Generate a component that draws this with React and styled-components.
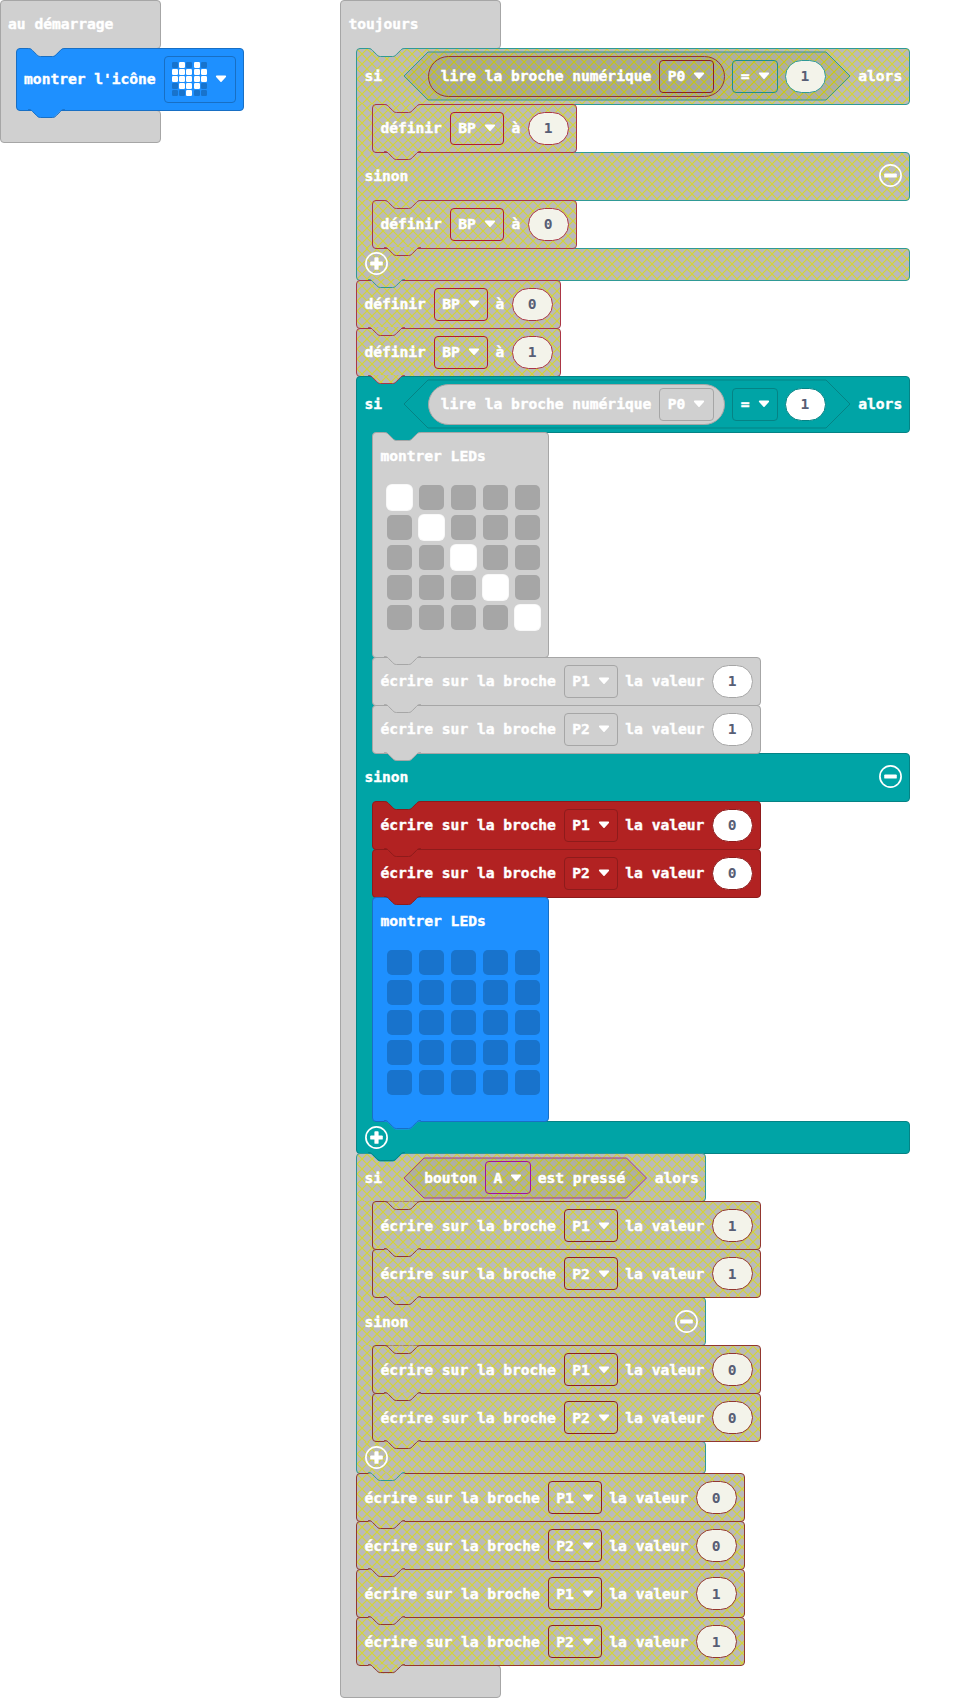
import React, { createContext, useContext, useId } from "react";
import styled, { createGlobalStyle, css } from "styled-components";

const GlobalStyle = createGlobalStyle`
  body { margin: 0; background: #fff; }
  *, *::before, *::after { box-sizing: border-box; }
`;

/* ---------- palette ---------- */

const themes = {
  hat: { fill: "#d0d0d0", line: "#a6a6a6", off: "#a6a6a6" },
  ghost: { fill: "#d0d0d0", line: "#a6a6a6", off: "#a6a6a6" },
  basic: { fill: "#1e90ff", line: "#186fc4", off: "#1873cc" },
  logic: { fill: "#00a4a6", line: "#058385" },
  pins: { fill: "#b22222", line: "#8e1b1b" },
  logicOff: { lattice: true, line: "#2f9a96" },
  pinsOff: { lattice: true, line: "#93372f" },
  varsOff: { lattice: true, line: "#ab3645" },
  inputOff: { lattice: true, line: "#a63a94" },
};

const Kind = createContext("hat");

const latticeLayers = (line, base) => css`
  background-color: ${base};
  background-image:
    linear-gradient(45deg, transparent calc(50% - 0.9px), ${line} calc(50% - 0.35px), ${line} calc(50% + 0.35px), transparent calc(50% + 0.9px)),
    linear-gradient(-45deg, transparent calc(50% - 0.9px), ${line} calc(50% - 0.35px), ${line} calc(50% + 0.35px), transparent calc(50% + 0.9px));
  background-size: 10px 10px;
`;

const paint = css`
  ${({ $kind }) =>
    themes[$kind].lattice
      ? latticeLayers("#d2d23c", "#bababa")
      : css`background-color: ${themes[$kind].fill};`}
  background-position: ${({ $px = 0, $py = 0 }) => `${-$px}px ${-$py}px`};
`;

/* ---------- text and fields ---------- */

const Label = styled.span`
  font: 700 14.62px/20px "DejaVu Sans Mono", monospace;
  letter-spacing: -0.03px;
  -webkit-text-stroke: 0.4px #fff;
  color: #fff;
  white-space: pre;
  flex: none;
`;

const FieldBox = styled.span`
  display: flex;
  align-items: center;
  gap: 8px;
  flex: none;
  height: ${({ $tall }) => ($tall ? 47 : 33)}px;
  margin-right: -1px;
  padding: 0 7.5px;
  border: 1px solid ${({ $kind }) => ($kind === "pinsOff" ? "#8e2020" : $kind === "varsOff" ? "#b01c30" : $kind === "inputOff" ? "#a6109c" : $kind === "logicOff" ? "#1d8f8e" : themes[$kind].line)};
  border-radius: 4px;
`;

const Arrow = styled.svg`
  width: 12px;
  height: 12px;
  flex: none;
`;

const Caret = () => (
  <Arrow viewBox="0 0 12 12">
    <path d="M1.7 3.4h8.6L6 8.2z" fill="#fff" stroke="#fff" strokeWidth="1.6" strokeLinejoin="round" />
  </Arrow>
);

function Field({ children }) {
  const kind = useContext(Kind);
  return (
    <FieldBox $kind={kind}>
      <Label>{children}</Label>
      <Caret />
    </FieldBox>
  );
}

const NumberBox = styled.span`
  display: flex;
  align-items: center;
  justify-content: center;
  flex: none;
  width: 41px;
  height: 33px;
  margin: 0 -1px 0 -0.5px;
  border: 1px solid ${({ $kind }) => themes[$kind].line};
  border-radius: 16.5px;
  background: ${({ $kind }) => (themes[$kind].lattice ? "#f3f3ea" : "#fff")};
  font: 700 14.62px/20px "DejaVu Sans Mono", monospace;
  color: #575e75;
`;

function Num({ children }) {
  return <NumberBox $kind={useContext(Kind)}>{children}</NumberBox>;
}

/* ---------- connectors ---------- */

const TabBox = styled.span`
  position: absolute;
  z-index: 2;
  left: 11px;
  ${({ $top }) => ($top ? "top: -1px;" : "bottom: -9px;")}
  width: 37px;
  height: 10px;
`;

const TabFill = styled.span`
  display: block;
  width: 37px;
  height: 10px;
  ${paint}
  clip-path: path("M0 0H36.5V1C34 1 33.3 2 32.5 2.8L28.5 6.8C27.5 8 26.5 9 24.5 9H12.5C10.5 9 9.5 8 8.5 6.8L4.5 2.8C3.7 2 3 1 .5 1Z");
`;

const TabLine = styled.svg`
  position: absolute;
  inset: 0;
  width: 37px;
  height: 10px;
`;

function Tab({ fillKind, lineKind, top, px = 12, py = 0 }) {
  return (
    <TabBox $top={top}>
      <TabFill $kind={fillKind} $px={px} $py={py} />
      <TabLine viewBox="0 0 37 10">
        <path
          d="M.2 .5C3 .5 3.7 1.6 4.5 2.4L8.5 6.4C9.5 7.6 10.5 8.5 12.5 8.5H24.5C26.5 8.5 27.5 7.6 28.5 6.4L32.5 2.4C33.3 1.6 34 .5 36.8 .5"
          fill="none"
          stroke={themes[lineKind].line}
        />
      </TabLine>
    </TabBox>
  );
}

/* ---------- simple blocks ---------- */

const Body = styled.div`
  position: relative;
  display: flex;
  flex: none;
  flex-direction: ${({ $column }) => ($column ? "column" : "row")};
  align-items: ${({ $column }) => ($column ? "flex-start" : "center")};
  gap: ${({ $column }) => ($column ? 0 : 8)}px;
  height: ${({ $h }) => $h + 1}px;
  margin-bottom: -1px;
  padding: 0 8px 0 7.5px;
  border: 1px solid ${({ $kind }) => themes[$kind].line};
  border-radius: 4px;
  ${paint}
`;

function Block({ kind, h = 48, column, notch, children }) {
  return (
    <Kind.Provider value={kind}>
      <Body $kind={kind} $h={h} $column={column}>
        {notch && <Tab top fillKind={notch} lineKind={kind} px={28} py={56} />}
        {children}
        <Tab fillKind={kind} lineKind={kind} py={h} />
      </Body>
    </Kind.Provider>
  );
}

const SetVar = ({ value, notch }) => (
  <Block kind="varsOff" notch={notch}>
    <Label>définir</Label>
    <Field>BP</Field>
    <Label>à</Label>
    <Num>{value}</Num>
  </Block>
);

const WritePin = ({ kind = "pinsOff", pin, value, notch }) => (
  <Block kind={kind} notch={notch}>
    <Label>écrire sur la broche</Label>
    <Field>{pin}</Field>
    <Label>la valeur</Label>
    <Num>{value}</Num>
  </Block>
);

/* ---------- LED panel ---------- */

const PanelTitle = styled.div`
  display: flex;
  align-items: center;
  height: 47px;
`;

const Leds = styled.div`
  display: grid;
  grid-template-columns: repeat(5, 25px);
  gap: 5px 7px;
  margin: 5px -0.6px 0 6.6px;
`;

const Led = styled.span`
  height: 25px;
  border-radius: 5px;
  background: ${({ $on, $kind }) => ($on ? "#fff" : themes[$kind].off)};
  box-shadow: 0 0 0 ${({ $on }) => ($on ? "1px rgba(255,255,255,.85)" : "0 transparent")};
`;

const cells = Array.from({ length: 25 }, (_, i) => i);

const ShowLeds = ({ kind, h, lit, notch }) => (
  <Block kind={kind} h={h} notch={notch} column>
    <PanelTitle>
      <Label>montrer LEDs</Label>
    </PanelTitle>
    <Leds>
      {cells.map((i) => (
        <Led key={i} $kind={kind} $on={lit.includes(i)} />
      ))}
    </Leds>
  </Block>
);

/* ---------- icon picker ---------- */

const HeartGrid = styled.span`
  display: grid;
  grid-template-columns: repeat(5, 6px);
  grid-auto-rows: 6px;
  gap: 1.2px;
  margin-right: 0.5px;
`;

const HeartDot = styled.span`
  border-radius: 1.2px;
  background: ${({ $on }) => ($on ? "#fff" : themes.basic.off)};
`;

const heart = "0101011111111110111000100";

const IconField = () => (
  <FieldBox $kind="basic" $tall>
    <HeartGrid>
      {[...heart].map((c, i) => (
        <HeartDot key={i} $on={c === "1"} />
      ))}
    </HeartGrid>
    <Caret />
  </FieldBox>
);

/* ---------- C-shaped blocks ---------- */

const Wrap = styled.div`
  position: relative;
  flex: none;
  width: ${({ $w }) => $w}px;
  margin-left: ${({ $shift = 0 }) => $shift}px;
`;

const corners = {
  head: "4px 4px 4px 0",
  middle: "0 4px 4px 0",
  foot: "0 4px 4px 4px",
};

const Arm = styled.div`
  position: relative;
  display: flex;
  align-items: center;
  justify-content: ${({ $spread }) => ($spread ? "space-between" : "flex-start")};
  gap: 8px;
  height: ${({ $h }) => $h + 1}px;
  margin-bottom: -1px;
  padding: 0 7.5px;
  border: 1px solid ${({ $kind }) => themes[$kind].line};
  border-radius: ${({ $part }) => corners[$part]};
  ${paint}
`;

const Mouth = styled.div`
  display: flex;
  align-items: stretch;
`;

const Spine = styled.div`
  position: relative;
  z-index: 1;
  flex: none;
  width: 19px;
  margin: 0 -3px -1px 0;
  border-left: 1px solid ${({ $kind }) => themes[$kind].line};
  ${paint}
`;

const Stack = styled.div`
  position: relative;
  z-index: 1;
  display: flex;
  flex-direction: column;
  align-items: flex-start;
`;

const RoundIcon = styled.svg`
  width: 23px;
  height: 23px;
  margin-top: -1px;
  flex: none;
`;

const RoundButton = ({ plus }) => (
  <RoundIcon viewBox="0 0 23 23" fill="#fff">
    <circle cx="11.5" cy="11.5" r="10.6" fill="none" stroke="#fff" strokeWidth="1.7" />
    <rect x="5.2" y="9.4" width="12.6" height="4.2" rx="0.9" />
    {plus && <rect x="9.4" y="5.2" width="4.2" height="12.6" rx="0.9" />}
  </RoundIcon>
);

function MouthPart({ kind, py, children }) {
  return (
    <Mouth>
      <Spine $kind={kind} $py={py} />
      <Stack>{children}</Stack>
    </Mouth>
  );
}

function IfElse({ kind, w, h, notch, condition, then, thenHeight, otherwise, otherwiseHeight }) {
  const y1 = h + thenHeight;
  const y2 = y1 + 48 + otherwiseHeight;
  return (
    <Kind.Provider value={kind}>
      <Wrap $w={w}>
        <Arm $kind={kind} $h={h} $part="head">
          {notch && <Tab top fillKind={notch} lineKind={kind} />}
          <Label>si</Label>
          {condition}
          <Label>alors</Label>
        </Arm>
        <MouthPart kind={kind} py={h}>{then}</MouthPart>
        <Arm $kind={kind} $h={48} $part="middle" $py={y1} $spread>
          <Label>sinon</Label>
          <RoundButton />
        </Arm>
        <MouthPart kind={kind} py={y1 + 48}>{otherwise}</MouthPart>
        <Arm $kind={kind} $h={32} $part="foot" $py={y2}>
          <RoundButton plus />
          <Tab fillKind={kind} lineKind={kind} py={y2 + 32} />
        </Arm>
      </Wrap>
    </Kind.Provider>
  );
}

const Hat = ({ title, shift, children }) => (
  <Wrap $w={161} $shift={shift}>
    <Arm $kind="hat" $h={47.5} $part="head">
      <Label>{title}</Label>
    </Arm>
    <MouthPart kind="hat">{children}</MouthPart>
    <Arm $kind="hat" $h={32} $part="foot" />
  </Wrap>
);

/* ---------- conditions ---------- */

const HexBox = styled.span`
  position: relative;
  display: flex;
  align-items: center;
  gap: 8px;
  flex: none;
  width: ${({ $w }) => $w}px;
  height: ${({ $h }) => $h}px;
  margin-left: 14.3px;
  padding: 0 ${({ $h }) => $h / 2}px;
`;

const HexShape = styled.svg`
  position: absolute;
  inset: 0;
  width: 100%;
  height: 100%;
  overflow: visible;
`;

const HexContent = styled.span`
  position: relative;
  display: flex;
  align-items: center;
  gap: 8px;
`;

function Hex({ kind, w, h, children }) {
  const id = useId();
  const s = h / 2;
  const { lattice, fill, line } = themes[kind];
  return (
    <Kind.Provider value={kind}>
      <HexBox $w={w} $h={h}>
        <HexShape viewBox={`0 0 ${w} ${h}`}>
          <pattern id={id} width="10" height="10" patternUnits="userSpaceOnUse">
            <rect width="10" height="10" fill="#a8a8a4" />
            <path d="M0 0L10 10M10 0L0 10" stroke="#c8c800" strokeWidth="1.2" />
          </pattern>
          <polygon
            points={`0,${s} ${s},0 ${w - s},0 ${w},${s} ${w - s},${h} ${s},${h}`}
            fill={lattice ? `url(#${id})` : fill}
            fillOpacity={lattice ? 0.75 : 1}
            stroke={line}
          />
        </HexShape>
        <HexContent>{children}</HexContent>
      </HexBox>
    </Kind.Provider>
  );
}

const PillBox = styled.span`
  display: flex;
  align-items: center;
  gap: 8px;
  flex: none;
  height: 41px;
  margin-right: -1px;
  padding: 0 11.5px;
  border: 1px solid ${({ $kind }) => themes[$kind].line};
  border-radius: 20.5px;
  ${({ $kind }) =>
    themes[$kind].lattice
      ? latticeLayers("rgba(204,204,0,.7)", "rgba(160,160,160,.65)")
      : css`background: ${themes[$kind].fill};`}
`;

const ReadPin = ({ kind }) => (
  <Kind.Provider value={kind}>
    <PillBox $kind={kind}>
      <Label>lire la broche numérique</Label>
      <Field>P0</Field>
    </PillBox>
  </Kind.Provider>
);

const PinEquals = ({ kind, pinKind }) => (
  <Hex kind={kind} w={446} h={48}>
    <ReadPin kind={pinKind} />
    <Field>=</Field>
    <Num>1</Num>
  </Hex>
);

const ButtonPressed = () => (
  <Hex kind="inputOff" w={242.5} h={40}>
    <Label>bouton</Label>
    <Field>A</Field>
    <Label>est pressé</Label>
  </Hex>
);

/* ---------- workspace ---------- */

const Workspace = styled.main`
  display: flex;
  align-items: flex-start;
  gap: 179.4px;
  width: 962px;
  height: 1698px;
  overflow: hidden;
`;

export default function App() {
  return (
    <Workspace>
      <GlobalStyle />
      <Hat title="au démarrage" shift={-0.4}>
        <Block kind="basic" h={62} notch="hat">
          <Label>montrer l'icône</Label>
          <IconField />
        </Block>
      </Hat>
      <Hat title="toujours">
        <IfElse
          kind="logicOff"
          w={554.4}
          h={56}
          notch="hat"
          condition={<PinEquals kind="logicOff" pinKind="pinsOff" />}
          thenHeight={48}
          then={<SetVar value="1" notch="logicOff" />}
          otherwiseHeight={48}
          otherwise={<SetVar value="0" notch="logicOff" />}
        />
        <SetVar value="0" />
        <SetVar value="1" />
        <IfElse
          kind="logic"
          w={554.4}
          h={56}
          condition={<PinEquals kind="logic" pinKind="ghost" />}
          thenHeight={321}
          then={
            <>
              <ShowLeds kind="ghost" h={225} lit={[0, 6, 12, 18, 24]} notch="logic" />
              <WritePin kind="ghost" pin="P1" value="1" />
              <WritePin kind="ghost" pin="P2" value="1" />
            </>
          }
          otherwiseHeight={320.9}
          otherwise={
            <>
              <WritePin kind="pins" pin="P1" value="0" notch="logic" />
              <WritePin kind="pins" pin="P2" value="0" />
              <ShowLeds kind="basic" h={224.9} lit={[]} />
            </>
          }
        />
        <IfElse
          kind="logicOff"
          w={350.4}
          h={48}
          condition={<ButtonPressed />}
          thenHeight={96}
          then={
            <>
              <WritePin pin="P1" value="1" notch="logicOff" />
              <WritePin pin="P2" value="1" />
            </>
          }
          otherwiseHeight={96}
          otherwise={
            <>
              <WritePin pin="P1" value="0" notch="logicOff" />
              <WritePin pin="P2" value="0" />
            </>
          }
        />
        <WritePin pin="P1" value="0" />
        <WritePin pin="P2" value="0" />
        <WritePin pin="P1" value="1" />
        <WritePin pin="P2" value="1" />
      </Hat>
    </Workspace>
  );
}
